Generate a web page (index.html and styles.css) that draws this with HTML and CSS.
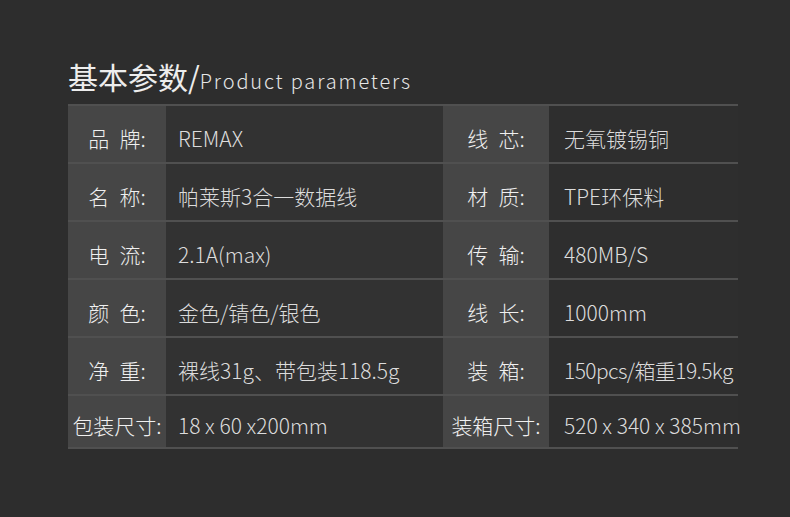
FILE: index.html
```html
<!DOCTYPE html>
<html lang="zh-CN">
<head>
<meta charset="utf-8">
<title>基本参数</title>
<link rel="stylesheet" href="styles.css">
</head>
<body>
<div class="page">
  <h1 class="title">基本参数/<span class="en">Product parameters</span></h1>
  <div class="table">
    <div class="row">
      <div class="lab">品&ensp;牌:</div><div class="val">REMAX</div>
      <div class="lab">线&ensp;芯:</div><div class="val val2">无氧镀锡铜</div>
    </div>
    <div class="row">
      <div class="lab">名&ensp;称:</div><div class="val">帕莱斯3合一数据线</div>
      <div class="lab">材&ensp;质:</div><div class="val val2">TPE环保料</div>
    </div>
    <div class="row">
      <div class="lab">电&ensp;流:</div><div class="val">2.1A(max)</div>
      <div class="lab">传&ensp;输:</div><div class="val val2">480MB/S</div>
    </div>
    <div class="row">
      <div class="lab">颜&ensp;色:</div><div class="val">金色/锖色/银色</div>
      <div class="lab">线&ensp;长:</div><div class="val val2">1000mm</div>
    </div>
    <div class="row">
      <div class="lab">净&ensp;重:</div><div class="val">裸线31g、带包装118.5g</div>
      <div class="lab">装&ensp;箱:</div><div class="val val2 tight">150pcs/箱重19.5kg</div>
    </div>
    <div class="row last">
      <div class="lab">包装尺寸:</div><div class="val">18 x 60 x200mm</div>
      <div class="lab">装箱尺寸:</div><div class="val val2">520 x 340 x 385mm</div>
    </div>
  </div>
</div>
</body>
</html>
```
FILE: styles.css
```css
html, body {
  margin: 0;
  padding: 0;
}
body {
  background: #2d2d2d;
  font-family: "Noto Sans CJK SC", "Noto Sans", sans-serif;
}
.page {
  padding: 56px 0 0 68px;
  width: 670px;
}
.title {
  margin: 0;
  height: 48px;
  font-size: 30px;
  line-height: 40px;
  font-weight: 400;
  color: #ededed;
  white-space: nowrap;
}
.title .en {
  font-size: 20px;
  font-weight: 300;
  letter-spacing: 1.85px;
  color: #e6e6e6;
}
.table {
  width: 670px;
  border-bottom: 2px solid rgba(255, 255, 255, 0.17);
}
.row {
  display: grid;
  grid-template-columns: 98px 277px 106px 189px;
  height: 56px;
  border-top: 2px solid rgba(255, 255, 255, 0.17);
}
.row.last {
  height: 51px;
}
.lab, .val {
  display: flex;
  align-items: center;
  padding-top: 8px;
  box-sizing: border-box;
  font-size: 21px;
  line-height: 21px;
  font-weight: 300;
  white-space: nowrap;
}
.lab {
  justify-content: center;
  background: #464646;
  color: #f0f0f0;
}
.val {
  padding-left: 12px;
  background: #323232;
  color: #dcdcdc;
}
.val2 {
  padding-left: 15px;
  background: #2e2e2e;
}
.tight {
  letter-spacing: -0.6px;
}
```
